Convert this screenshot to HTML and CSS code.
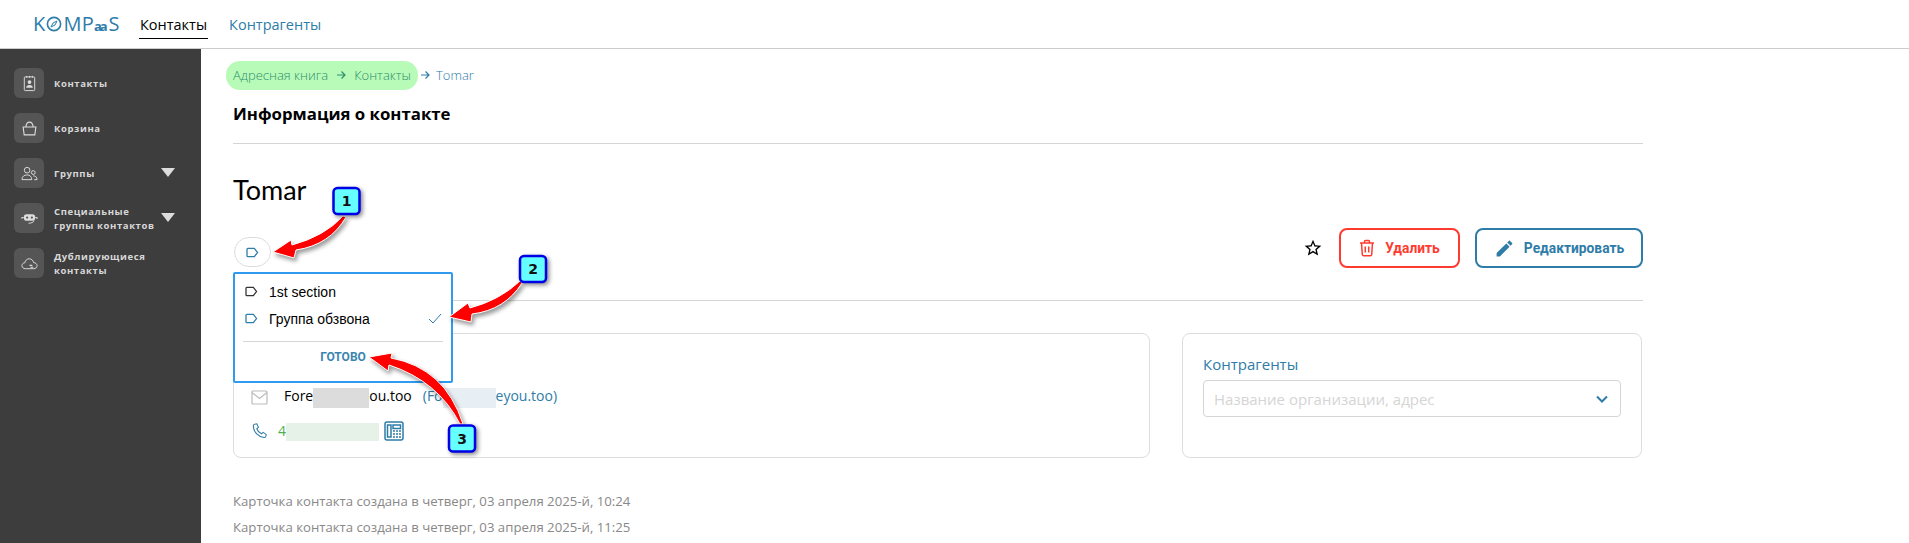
FILE: index.html
```html
<!DOCTYPE html>
<html lang="ru">
<head>
    <meta charset="UTF-8">
    <meta name="viewport" content="width=device-width, initial-scale=1.0">
    <title>Информация о контакте</title>
    <link rel="stylesheet" href="styles.css">
</head>
<body>
    <header class="topbar">
        <div class="logo">K<svg class="logo-o" viewBox="0 0 16 16"><circle cx="8" cy="8" r="6.6"/><path class="needle" d="M11 5 9 9 5 11 7 7z"/></svg>MP<span class="logo-aa">aa</span>S</div>
        <nav class="topnav">
            <a class="topnav-item active">Контакты</a>
            <a class="topnav-item">Контрагенты</a>
        </nav>
    </header>

    <div class="layout">
        <aside class="sidebar">
            <div class="side-item">
                <span class="side-icon">
                    <svg viewBox="0 0 16 18"><rect x="2.5" y="2" width="11" height="14.5" rx="1"/><path d="M5 1v2M8 1v2M11 1v2"/><circle class="solid" cx="8" cy="7.5" r="2"/><path class="solid" d="M4.5 13.5c0-2 1.5-3 3.5-3s3.5 1 3.5 3z"/></svg>
                </span>
                <span class="side-label">Контакты</span>
            </div>
            <div class="side-item">
                <span class="side-icon">
                    <svg viewBox="0 0 16 16"><path d="M2 6.5h12l-1 7.5H3zM4.5 6.5C5 3 6.5 2 8 2s3 1 3.5 4.5"/></svg>
                </span>
                <span class="side-label">Корзина</span>
            </div>
            <div class="side-item">
                <span class="side-icon">
                    <svg viewBox="0 0 18 16"><circle cx="6.5" cy="4.5" r="3"/><circle cx="13" cy="7" r="2"/><path d="M1 14.5c0-3.5 2.5-5 5.500-5s4.500 1.500 5 5zM13 10.500c2 0 4 1 4 4h-3"/></svg>
                </span>
                <span class="side-label">Группы</span>
                <span class="side-caret"></span>
            </div>
            <div class="side-item">
                <span class="side-icon">
                    <svg viewBox="0 0 18 16"><rect class="solid" x="3" y="3.5" width="12" height="7" rx="3"/><path d="M1 6.5v2M17 6.5v2M3 7H1M17 7h-2M8 13c3 0 5-1 6-2.500"/><circle class="hole" cx="6.5" cy="7" r="1.2"/><circle class="hole" cx="11.5" cy="7" r="1.2"/></svg>
                </span>
                <span class="side-label">Специальные<br>группы контактов</span>
                <span class="side-caret"></span>
            </div>
            <div class="side-item">
                <span class="side-icon">
                    <svg viewBox="0 0 18 16"><path d="M4.5 13.5C2.5 13.5 1 12 1 10.300S2.300 7.300 4 7.300C4.500 4.500 6.500 3 8.700 3c2.500 0 4.300 1.800 4.600 4 2 .1 3.700 1.500 3.700 3.300 0 1.900-1.500 3.200-3.500 3.200z"/><path class="thick" d="M9 10h3M10 12h3"/></svg>
                </span>
                <span class="side-label">Дублирующиеся<br>контакты</span>
            </div>
        </aside>

        <main class="content">
            <div class="breadcrumbs">
                <div class="crumb-pill">
                    <span>Адресная книга</span>
                    <svg class="crumb-arrow" viewBox="0 0 10 10"><path d="M1 5h8M5.5 1.5 9 5 5.5 8.5"/></svg>
                    <span>Контакты</span>
                </div>
                <svg class="crumb-arrow blue" viewBox="0 0 10 10"><path d="M1 5h8M5.5 1.5 9 5 5.5 8.5"/></svg>
                <span class="crumb-last">Tomar</span>
            </div>

            <h2 class="page-title">Информация о контакте</h2>
            <div class="divider title-line"></div>

            <h1 class="contact-name">Tomar</h1>

            <div class="tag-row">
                <button class="tag-chip">
                    <svg class="tag-icon blue" viewBox="0 0 14 12"><path d="M2 1.5h7l3.500 4.500L9 10.500H2a1 1 0 0 1-1-1v-7a1 1 0 0 1 1-1z"/></svg>
                </button>
                <div class="actions">
                    <svg class="star" viewBox="0 0 24 24"><path d="M22 9.240l-7.190-.62L12 2 9.190 8.630 2 9.240l5.460 4.730L5.820 21 12 17.270 18.180 21l-1.630-7.030L22 9.240zM12 15.400l-3.760 2.270 1-4.280-3.320-2.880 4.380-.38L12 6.100l1.710 4.040 4.380.38-3.320 2.880 1 4.280L12 15.400z"/></svg>
                    <button class="btn btn-delete">
                        <svg viewBox="0 0 16 18"><path d="M1 4h14M5.500 4V2.500a1 1 0 0 1 1-1h3a1 1 0 0 1 1 1V4M2.500 4l.8 11.500a1.500 1.500 0 0 0 1.500 1.300h6.400a1.500 1.500 0 0 0 1.500-1.300L13.500 4M6.300 7.500v6M9.700 7.500v6"/></svg>
                        Удалить
                    </button>
                    <button class="btn btn-edit">
                        <svg viewBox="0 0 24 24"><path d="M3 17.250V21h3.750L17.810 9.940l-3.750-3.750L3 17.250zM20.710 7.040c.39-.39.39-1.020 0-1.410l-2.340-2.340c-.39-.39-1.020-.39-1.410 0l-1.830 1.830 3.750 3.750 1.830-1.830z"/></svg>
                        Редактировать
                    </button>
                </div>

                <div class="tag-menu">
                    <div class="tag-option">
                        <svg class="tag-icon dark" viewBox="0 0 14 12"><path d="M2 1.500h7l3.500 4.500L9 10.500H2a1 1 0 0 1-1-1v-7a1 1 0 0 1 1-1z"/></svg>
                        <span>1st section</span>
                    </div>
                    <div class="tag-option">
                        <svg class="tag-icon blue" viewBox="0 0 14 12"><path d="M2 1.500h7l3.500 4.500L9 10.500H2a1 1 0 0 1-1-1v-7a1 1 0 0 1 1-1z"/></svg>
                        <span>Группа обзвона</span>
                        <svg class="tag-check" viewBox="0 0 14 11"><path d="M1 6l4 4 8-9"/></svg>
                    </div>
                    <div class="tag-menu-line"></div>
                    <div class="tag-done">готово</div>
                </div>
            </div>

            <div class="divider tag-line"></div>

            <div class="cards">
                <section class="card card-contact">
                    <div class="contact-row">
                        <svg class="mail-icon" viewBox="0 0 17 15"><rect x="1" y="1" width="15" height="13" rx="1"/><path d="M1 2.500l7.500 6 7.500-6"/></svg>
                        <span class="email">Fore<span class="blur blur-gray"></span>ou.too</span>
                        <span class="email-alt">(Fo<span class="blur blur-blue"></span>eyou.too)</span>
                    </div>
                    <div class="contact-row">
                        <svg class="phone-icon" viewBox="0 0 24 24"><path d="M5 2.500l3.200-.7 2.300 5-2.300 2c1 2.800 3.500 5.800 6.500 7.200l2.300-2 4.500 2.800-.8 3.200c-.3.900-1.100 1.300-2 1.200C10 20 3.300 13 3.300 4.500c0-1 .7-1.800 1.700-2z"/></svg>
                        <span class="phone">4<span class="blur blur-green"></span></span>
                        <svg class="fax-icon" viewBox="0 0 20 20"><rect x="1" y="1" width="18" height="18" rx="2"/><rect x="3.500" y="4" width="3.500" height="12"/><rect x="9" y="4" width="7.500" height="3.500"/><path class="dots" d="M9 10h2M12 10h2M15 10h2M9 13h2M12 13h2M15 13h2M9 16h2M12 16h2M15 16h2"/></svg>
                    </div>
                </section>
                <section class="card card-partners">
                    <div class="field-label">Контрагенты</div>
                    <div class="select-box">
                        <span>Название организации, адрес</span>
                        <svg viewBox="0 0 12 8"><path d="M1 1.500l5 5 5-5"/></svg>
                    </div>
                </section>
            </div>

            <div class="card-meta">
                <div>Карточка контакта создана в четверг, 03 апреля 2025-й, 10:24</div>
                <div>Карточка контакта создана в четверг, 03 апреля 2025-й, 11:25</div>
            </div>
        </main>
    </div>

    <!-- callouts drawn on top of the screenshot -->
    <svg class="callouts" viewBox="0 0 1909 543">
        <path class="arrow" d="M273 252 291 240 292 245Q325 236 343 216L346 217Q330 245 296 250L294 258Z"/>
        <path class="arrow" d="M449 317 468 303 470 308Q500 300 520 281L522 283Q505 310 472 314L471 322Z"/>
        <path class="arrow" d="M369 357 392 353 391 358Q445 368 463 424L460 424Q438 381 389 365L388 371Z"/>
        <rect class="badge" x="333.5" y="188" width="26" height="26" rx="4"/>
        <text class="badge-num" x="346.5" y="206">1</text>
        <rect class="badge" x="520" y="256" width="26" height="26" rx="4"/>
        <text class="badge-num" x="533" y="274">2</text>
        <rect class="badge" x="449" y="425.5" width="26" height="26" rx="4"/>
        <text class="badge-num" x="462" y="443.5">3</text>
    </svg>
</body>
</html>
```

FILE: styles.css
```css
* {
    box-sizing: border-box;
}

body {
    margin: 0;
    height: 100vh;
    overflow: hidden;
    position: relative;
    background-color: white;
    font-family: 'Open Sans', sans-serif;
    color: black;
}

/* top bar */
.topbar {
    display: flex;
    height: 49px;
    padding-left: 33px;
    border-bottom: 1px solid #ccc;
}

.logo {
    display: flex;
    align-items: center;
    width: 106px;
    height: 48px;
    padding-bottom: 1px;
    font-family: 'Open Sans', sans-serif;
    font-size: 20px;
    letter-spacing: 0.2px;
    color: #2e7ca8;
}

.logo-o {
    width: 16px;
    height: 16px;
    margin: 0 1px;
    fill: none;
    stroke: #2e7ca8;
    stroke-width: 1.6;
}

.needle {
    stroke-width: 1;
}

.logo-aa {
    font-size: 13px;
    letter-spacing: -2px;
    margin: 4px 3px 0 0;
    font-weight: 700;
}

.topnav {
    display: flex;
    gap: 20px;
}

.topnav-item {
    height: 39px;
    padding: 14px 1px 0;
    font-size: 14.5px;
    line-height: 22px;
    color: #2e7ca8;
}

.topnav-item.active {
    color: black;
    border-bottom: 1px solid black;
}

.layout {
    display: flex;
    height: calc(100vh - 49px);
}

/* sidebar */
.sidebar {
    flex: 0 0 201px;
    min-width: 0;
    display: flex;
    flex-direction: column;
    gap: 15px;
    padding: 19px 26px 0 14px;
    background-color: #3d3d3d;
}

.side-item {
    display: flex;
    align-items: center;
    height: 30px;
}

.side-icon {
    flex: 0 0 30px;
    display: flex;
    align-items: center;
    justify-content: center;
    height: 30px;
    margin-right: 10px;
    border-radius: 6px;
    background-color: #555;
}

.side-icon svg {
    width: 17px;
    height: 17px;
    fill: none;
    stroke: #ddd;
    stroke-width: 1;
}

.side-icon .solid {
    fill: #ddd;
    stroke: none;
}

.side-icon .hole {
    fill: #555;
    stroke: none;
}

.side-icon .thick {
    stroke-width: 1.2;
}

.side-label {
    padding-top: 1px;
    font-size: 9.5px;
    font-weight: 700;
    line-height: 14px;
    letter-spacing: 0.6px;
    white-space: nowrap;
    color: #d8d8d8;
}

.side-caret {
    width: 0;
    height: 0;
    margin-left: auto;
    margin-bottom: 1px;
    border-left: 7px solid transparent;
    border-right: 7px solid transparent;
    border-top: 9px solid #ddd;
}

/* main column */
.content {
    flex: 0 0 1442px;
    padding: 12px 0 0 32px;
}

.breadcrumbs {
    display: flex;
    align-items: center;
    height: 29px;
    margin-left: -7px;
    font-size: 13px;
    font-weight: 300;
}

.crumb-pill {
    display: flex;
    align-items: center;
    gap: 8px;
    height: 29px;
    padding: 0 7px 2px;
    border-radius: 14px;
    background-color: #b8fbb8;
    color: #2f8f6c;
}

.crumb-arrow {
    width: 10px;
    height: 10px;
    fill: none;
    stroke: #2f8f6c;
    stroke-width: 1.2;
}

.crumb-arrow.blue {
    margin: 0 6px 2px 2px;
    stroke: #2e7ca8;
}

.crumb-last {
    padding-bottom: 2px;
    color: #2e7ca8;
}

.page-title {
    margin: 13px 0 0;
    font-size: 16.8px;
    line-height: 22px;
    font-weight: 700;
}

.divider {
    height: 1px;
    background-color: #d5d5d5;
}

.title-line {
    margin-top: 18px;
}

.contact-name {
    margin: 26px 0 0;
    font-family: Lato, sans-serif;
    font-size: 27px;
    line-height: 40px;
    font-weight: 400;
}

.tag-row {
    position: relative;
    display: flex;
    justify-content: space-between;
    height: 40px;
    margin-top: 18px;
}

.tag-chip {
    display: flex;
    align-items: center;
    justify-content: center;
    width: 37px;
    height: 30px;
    margin: 9px 0 0 1px;
    padding: 0;
    border: 1px solid #ddd;
    border-radius: 15px;
    background-color: white;
}

.tag-icon {
    width: 13px;
    height: 11px;
    fill: none;
    stroke-width: 1.4;
}

.tag-icon.blue {
    stroke: #2e7ca8;
}

.tag-icon.dark {
    stroke: #333;
}

.actions {
    display: flex;
    align-items: center;
    gap: 15px;
}

.star {
    width: 20px;
    height: 20px;
    margin: 0 1px 0 0;
}

.btn {
    display: flex;
    align-items: center;
    justify-content: center;
    height: 40px;
    padding: 0;
    border-radius: 8px;
    border: 2px solid;
    background-color: white;
    font-family: Roboto, sans-serif;
    font-size: 13.8px;
    font-weight: 700;
}

.btn-delete {
    width: 121px;
    gap: 10px;
    color: #ff3b30;
    border-color: #ff3b30;
}

.btn-delete svg {
    width: 16px;
    height: 18px;
    fill: none;
    stroke: #ff3b30;
    stroke-width: 1.5;
}

.btn-edit {
    width: 168px;
    gap: 9px;
    color: #2e7ca8;
    border-color: #2e7ca8;
}

.btn-edit svg {
    width: 21px;
    height: 21px;
    fill: #2e7ca8;
}

/* tag dropdown */
.tag-menu {
    position: absolute;
    top: 44px;
    left: 0;
    z-index: 2;
    width: 220px;
    height: 111px;
    padding: 4px 8px 0;
    border: 2px solid #2f9bf0;
    border-radius: 2px;
    background-color: white;
}

.tag-option {
    display: flex;
    align-items: center;
    height: 27px;
    padding-left: 2px;
    font-family: 'Liberation Sans', sans-serif;
    font-size: 14px;
}

.tag-option .tag-icon {
    margin: 0 11px 0 0;
}

.tag-check {
    width: 14px;
    height: 11px;
    margin-left: auto;
    margin-right: 1px;
    fill: none;
    stroke: #2e7ca8;
    stroke-width: 1;
}

.tag-menu-line {
    height: 1px;
    margin-top: 9px;
    background-color: #d5d5d5;
}

.tag-done {
    margin-top: 7px;
    text-align: center;
    font-family: Roboto, sans-serif;
    font-size: 12px;
    font-weight: 700;
    line-height: 16px;
    text-transform: uppercase;
    color: #3a85b0;
}

.tag-line {
    margin-top: 32px;
}

/* cards */
.cards {
    display: grid;
    grid-template-columns: 917px 460px;
    gap: 32px;
    margin-top: 32px;
}

.card {
    height: 125px;
    border: 1px solid #ddd;
    border-radius: 8px;
}

.card-contact {
    padding: 51px 0 0 17px;
    display: flex;
    flex-direction: column;
    gap: 10px;
}

.contact-row {
    display: flex;
    align-items: center;
    height: 24px;
    font-size: 14px;
}

.mail-icon {
    width: 17px;
    height: 15px;
    margin-right: 16px;
    fill: none;
    stroke: #bbb;
    stroke-width: 1.2;
}

.email-alt {
    margin-left: 11px;
    color: #2e7ca8;
}

.blur {
    display: inline-block;
    vertical-align: middle;
}

.blur-gray {
    width: 56px;
    height: 20px;
    background-color: #dcdcdc;
}

.blur-blue {
    width: 53px;
    height: 20px;
    background-color: #e8eff4;
}

.blur-green {
    width: 93px;
    height: 18px;
    background-color: #e6f2e8;
}

.phone-icon {
    width: 17px;
    height: 18px;
    margin-right: 10px;
    fill: none;
    stroke: #2e7ca8;
    stroke-width: 1.5;
}

.phone {
    color: #4caf50;
}

.fax-icon {
    width: 20px;
    height: 20px;
    margin-left: 5px;
    fill: none;
    stroke: #2e7ca8;
    stroke-width: 1.5;
}

.fax-icon .dots {
    stroke-width: 1.3;
}

.card-partners {
    padding: 20px 20px 0;
}

.field-label {
    font-size: 15px;
    line-height: 20px;
    color: #2e7ca8;
}

.select-box {
    display: flex;
    align-items: center;
    justify-content: space-between;
    height: 37px;
    margin-top: 6px;
    padding: 0 12px 0 10px;
    border: 1px solid #d5d5d5;
    border-radius: 4px;
    font-size: 15px;
    color: #d5d5d5;
}

.select-box svg {
    width: 12px;
    height: 8px;
    fill: none;
    stroke: #2e7ca8;
    stroke-width: 2;
}

.card-meta {
    margin-top: 30px;
    font-size: 13.2px;
    line-height: 26px;
    color: #888;
}

/* callouts */
.callouts {
    position: absolute;
    top: 0;
    left: 0;
    z-index: 3;
    width: 1909px;
    height: 543px;
    pointer-events: none;
}

.arrow {
    fill: #f00;
    stroke: white;
    stroke-width: 1;
    filter: drop-shadow(2px 3px 2px rgba(0, 0, 0, 0.4));
}

.badge {
    fill: #66ffff;
    stroke: #0000e6;
    stroke-width: 2.5;
    filter: drop-shadow(2px 2px 2px rgba(0, 0, 0, 0.45));
}

.badge-num {
    font-family: 'DejaVu Sans', sans-serif;
    font-size: 14px;
    font-weight: 700;
    text-anchor: middle;
    fill: #111;
}
```
